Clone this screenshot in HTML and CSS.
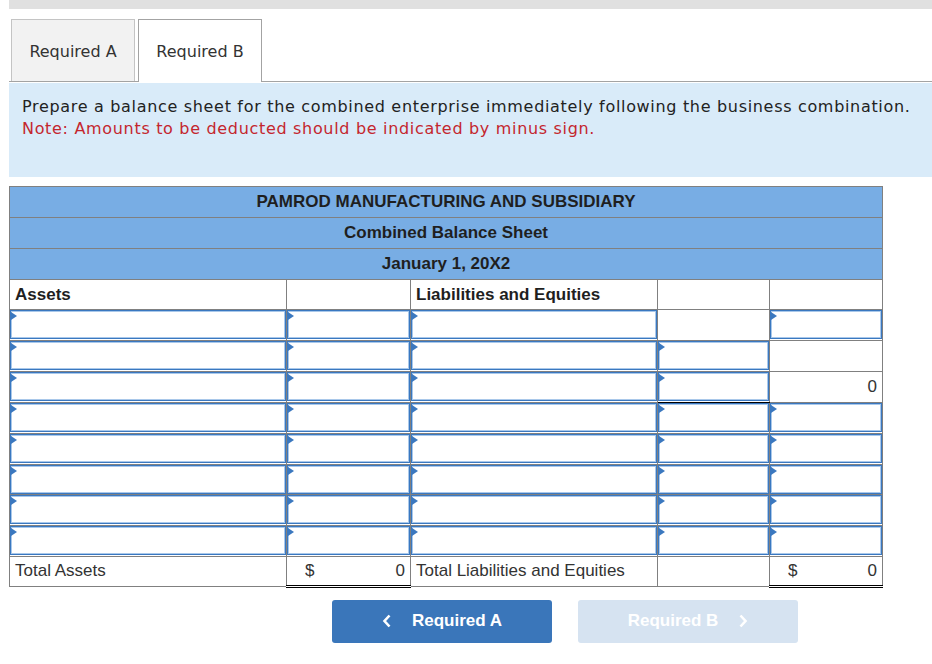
FILE: index.html
```html
<!DOCTYPE html>
<html lang="en">
<head>
<meta charset="utf-8">
<title>Combined Balance Sheet</title>
<link rel="stylesheet" href="styles.css">
</head>
<body>
<div class="page">
  <div class="topbar"></div>
  <div class="tabs">
    <div class="tab">Required A</div>
    <div class="tab active">Required B</div>
  </div>
  <div class="instructions">
    <p>Prepare a balance sheet for the combined enterprise immediately following the business combination.</p>
    <p class="note">Note: Amounts to be deducted should be indicated by minus sign.</p>
  </div>
  <table class="sheet">
    <colgroup>
      <col class="c1"><col class="c2"><col class="c3"><col class="c4"><col class="c5">
    </colgroup>
    <tr class="hdr"><td colspan="5">PAMROD MANUFACTURING AND SUBSIDIARY</td></tr>
    <tr class="hdr"><td colspan="5">Combined Balance Sheet</td></tr>
    <tr class="hdr"><td colspan="5">January 1, 20X2</td></tr>
    <tr class="colhdr"><td>Assets</td><td></td><td>Liabilities and Equities</td><td></td><td></td></tr>
    <tr>
      <td class="in"><div class="inp"></div></td><td class="in"><div class="inp"></div></td><td class="in"><div class="inp"></div></td>
      <td></td><td class="in"><div class="inp"></div></td>
    </tr>
    <tr>
      <td class="in"><div class="inp"></div></td><td class="in"><div class="inp"></div></td><td class="in"><div class="inp"></div></td>
      <td class="in"><div class="inp"></div></td><td></td>
    </tr>
    <tr>
      <td class="in"><div class="inp"></div></td><td class="in"><div class="inp"></div></td><td class="in"><div class="inp"></div></td>
      <td class="in under"><div class="inp"></div></td><td class="num">0</td>
    </tr>
    <tr>
      <td class="in"><div class="inp"></div></td><td class="in"><div class="inp"></div></td><td class="in"><div class="inp"></div></td>
      <td class="in"><div class="inp"></div></td><td class="in"><div class="inp"></div></td>
    </tr>
    <tr>
      <td class="in"><div class="inp"></div></td><td class="in"><div class="inp"></div></td><td class="in"><div class="inp"></div></td>
      <td class="in"><div class="inp"></div></td><td class="in"><div class="inp"></div></td>
    </tr>
    <tr>
      <td class="in"><div class="inp"></div></td><td class="in"><div class="inp"></div></td><td class="in"><div class="inp"></div></td>
      <td class="in"><div class="inp"></div></td><td class="in"><div class="inp"></div></td>
    </tr>
    <tr>
      <td class="in"><div class="inp"></div></td><td class="in"><div class="inp"></div></td><td class="in"><div class="inp"></div></td>
      <td class="in"><div class="inp"></div></td><td class="in"><div class="inp"></div></td>
    </tr>
    <tr>
      <td class="in"><div class="inp"></div></td><td class="in"><div class="inp"></div></td><td class="in"><div class="inp"></div></td>
      <td class="in"><div class="inp"></div></td><td class="in"><div class="inp"></div></td>
    </tr>
    <tr class="total">
      <td class="label">Total Assets</td>
      <td class="money"><span class="cur">$</span><span>0</span></td>
      <td class="label">Total Liabilities and Equities</td>
      <td></td>
      <td class="money"><span class="cur">$</span><span>0</span></td>
    </tr>
  </table>
  <div class="nav">
    <button class="btn prev" type="button">
      <svg class="chev" width="10" height="14" viewBox="0 0 10 14"><polyline points="7.5,1.5 2.5,7 7.5,12.5" fill="none" stroke="#fff" stroke-width="2.6"/></svg>
      <span>Required A</span>
    </button>
    <button class="btn next" type="button" disabled>
      <span>Required B</span>
      <svg class="chev" width="10" height="14" viewBox="0 0 10 14"><polyline points="2.5,1.5 7.5,7 2.5,12.5" fill="none" stroke="#fff" stroke-width="2.6"/></svg>
    </button>
  </div>
</div>
</body>
</html>
```

FILE: styles.css
```css
html, body {
  margin: 0;
  padding: 0;
  background: #fff;
}

.page {
  width: 932px;
  font-family: "Liberation Sans", Arial, sans-serif;
  color: #222;
}

.topbar {
  height: 9px;
  margin-left: 9px;
  background: #e0e0e0;
}

.tabs {
  display: flex;
  align-items: flex-start;
  gap: 3px;
  height: 62px;
  margin: 10px 0 0 9px;
  padding-left: 2px;
  border-bottom: 1px solid #a3a3a3;
}

.tab {
  box-sizing: border-box;
  width: 124px;
  height: 62px;
  padding-top: 1px;
  display: flex;
  align-items: center;
  justify-content: center;
  background: #f2f2f2;
  border: 1px solid #c4c4c4;
  border-bottom: none;
  font-family: "DejaVu Sans", Verdana, sans-serif;
  font-size: 16px;
  color: #333;
}

.tab.active {
  height: 63px;
  background: #fff;
  border-color: #a3a3a3;
  position: relative;
  z-index: 1;
}

.instructions {
  box-sizing: border-box;
  height: 94px;
  margin: 1px 0 0 9px;
  padding: 13px 13px;
  background: #d9ebf9;
  font-family: "DejaVu Sans", Verdana, sans-serif;
  font-size: 16px;
  letter-spacing: 0.68px;
  line-height: 22px;
  color: #222;
}

.instructions p {
  margin: 0;
}

.instructions .note {
  color: #c4262e;
}

.sheet {
  margin: 9px 0 0 9px;
  width: 873px;
  border-collapse: collapse;
  table-layout: fixed;
  font-size: 17px;
}

.c1 { width: 277px; }
.c2 { width: 124px; }
.c3 { width: 247px; }
.c4 { width: 112px; }
.c5 { width: 113px; }

.sheet td {
  border: 1px solid #808080;
  padding: 0;
  height: 30px;
  line-height: 30px;
  vertical-align: top;
  white-space: nowrap;
  overflow: hidden;
}

.hdr td {
  background: #78ade4;
  text-align: center;
  font-weight: bold;
  color: #1f1f1f;
}

.sheet .colhdr td {
  height: 29px;
  line-height: 29px;
  font-weight: bold;
  color: #1f1f1f;
  padding-left: 5px;
}

.sheet td.in {
  height: 29.75px;
}

.inp {
  position: relative;
  box-sizing: border-box;
  height: 29px;
  margin-bottom: 0.75px;
  border: 1px solid #3a78c0;
  box-shadow: inset 0 0 0 1px #a9c8ea;
  background: #fff;
}

.inp::before {
  content: "";
  position: absolute;
  top: 1px;
  left: 0;
  width: 0;
  height: 0;
  border-left: 6px solid #3b78bf;
  border-top: 4px solid transparent;
  border-bottom: 4px solid transparent;
}

.sheet td.under {
  border-bottom: 1px solid #000;
}

.sheet td.num {
  text-align: right;
  padding-right: 5px;
  color: #333;
}

.total td {
  color: #333;
}

.sheet .total td {
  height: 28px;
  line-height: 28px;
}

.total td.label {
  padding-left: 5px;
}

.total td.money {
  border-top: 1px solid #000;
  border-bottom: 3px double #000;
  padding: 0 5px 0 18px;
}

.money {
  text-align: right;
}

.money .cur {
  float: left;
}

.nav {
  display: flex;
  gap: 26px;
  margin-top: 12px;
  padding-left: 332px;
}

.btn {
  box-sizing: border-box;
  width: 220px;
  height: 43px;
  display: flex;
  align-items: center;
  justify-content: center;
  gap: 20px;
  border: none;
  border-radius: 3px;
  font-family: "Liberation Sans", Arial, sans-serif;
  font-size: 17px;
  font-weight: bold;
  color: #fff;
  padding: 0;
  cursor: pointer;
}

.btn.prev {
  background: #3a76ba;
}

.btn.next {
  background: #d6e3f1;
  cursor: default;
}

.chev {
  display: block;
}
```
